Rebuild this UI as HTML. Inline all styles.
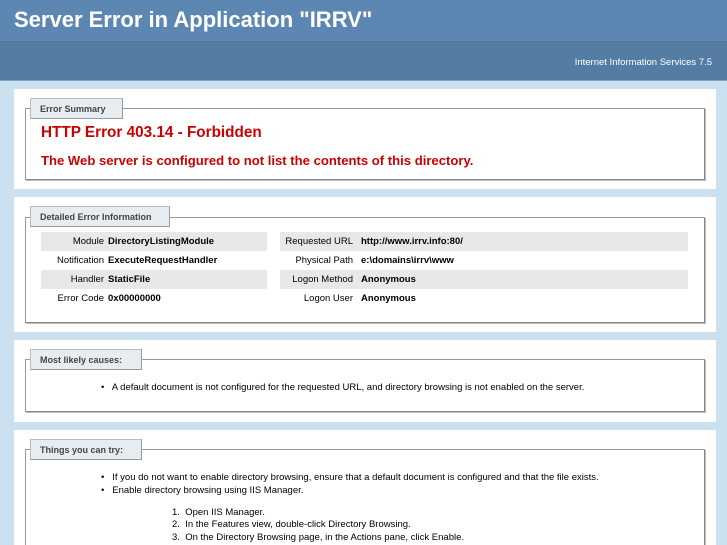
<!DOCTYPE html>
<html><head><style>
*{margin:0;padding:0;box-sizing:border-box}
html,body{width:727px;height:545px;overflow:hidden}
body{background:#CBE1EF;font-family:"Liberation Sans",sans-serif;position:relative;color:#000}
.a{position:absolute}
#h1{left:0;top:0;width:727px;height:42px;background:#5C87B2;border-bottom:1px solid #4F76A0}
#h1 div{position:absolute;left:14px;top:7px;font-size:22px;font-weight:bold;color:#fff;white-space:nowrap}
#h2{left:0;top:42px;width:727px;height:39px;background:#557DA4;border-bottom:1px solid #7DA2C4}
#h2 div{position:absolute;right:15px;top:15px;font-size:9.5px;color:#fff}
.p{background:#fff;left:14px;width:702px}
.f{border:1px solid #999;border-right-color:#888;border-bottom-color:#888;box-shadow:1px 1px 0 #bbb;left:11px;width:680px}
.lg{background:#E7ECF0;border:1px solid #bbb;border-bottom-color:#999;border-right-color:#999;font-size:9px;font-weight:bold;color:#444;padding:5px 9px 0;height:21px;white-space:nowrap}
.red{color:#CC0000;font-weight:bold;white-space:nowrap}
.row{height:19px;white-space:nowrap}
.g{background:#E8E8E8}
.t{font-size:9.5px;white-space:nowrap}
b{font-weight:bold}
</style></head><body>
<div id="h1" class="a"><div>Server Error in Application "IRRV"</div></div>
<div id="h2" class="a"><div>Internet Information Services 7.5</div></div>

<div class="a p" style="top:89px;height:100px">
 <div class="a f" style="top:19px;height:72px"></div>
 <div class="a lg" style="left:16px;top:9px;width:93px">Error Summary</div>
 <div class="a red" style="left:27px;top:35px;font-size:15.3px">HTTP Error 403.14 - Forbidden</div>
 <div class="a red" style="left:27px;top:64px;font-size:13.1px">The Web server is configured to not list the contents of this directory.</div>
</div>

<div class="a p" style="top:197px;height:135px">
 <div class="a f" style="top:20px;height:106px"></div>
 <div class="a lg" style="left:16px;top:9px;width:140px">Detailed Error Information</div>
 <div class="a row g" style="left:27px;top:35px;width:226px"></div>
 <div class="a row g" style="left:27px;top:73px;width:226px"></div>
 <div class="a row g" style="left:266px;top:35px;width:408px"></div>
 <div class="a row g" style="left:266px;top:73px;width:408px"></div>
 <div class="a t" style="right:612px;top:39px">Module</div><div class="a t" style="left:94px;top:39px"><b>DirectoryListingModule</b></div>
 <div class="a t" style="right:612px;top:58px">Notification</div><div class="a t" style="left:94px;top:58px"><b>ExecuteRequestHandler</b></div>
 <div class="a t" style="right:612px;top:77px">Handler</div><div class="a t" style="left:94px;top:77px"><b>StaticFile</b></div>
 <div class="a t" style="right:612px;top:96px">Error Code</div><div class="a t" style="left:94px;top:96px"><b>0x00000000</b></div>
 <div class="a t" style="right:363px;top:39px">Requested URL</div><div class="a t" style="left:347px;top:39px"><b>http://www.irrv.info:80/</b></div>
 <div class="a t" style="right:363px;top:58px">Physical Path</div><div class="a t" style="left:347px;top:58px"><b>e:\domains\irrv\www</b></div>
 <div class="a t" style="right:363px;top:77px">Logon Method</div><div class="a t" style="left:347px;top:77px"><b>Anonymous</b></div>
 <div class="a t" style="right:363px;top:96px">Logon User</div><div class="a t" style="left:347px;top:96px"><b>Anonymous</b></div>
</div>

<div class="a p" style="top:340px;height:82px">
 <div class="a f" style="top:19px;height:53px"></div>
 <div class="a lg" style="left:16px;top:9px;width:112px">Most likely causes:</div>
 <div class="a t" style="left:87px;top:42px">•&nbsp;&nbsp; A default document is not configured for the requested URL, and directory browsing is not enabled on the server.</div>
</div>

<div class="a p" style="top:430px;height:115px">
 <div class="a f" style="top:19px;height:120px"></div>
 <div class="a lg" style="left:16px;top:9px;width:112px">Things you can try:</div>
 <div class="a t" style="left:87px;top:42px">•&nbsp;&nbsp; If you do not want to enable directory browsing, ensure that a default document is configured and that the file exists.</div>
 <div class="a t" style="left:87px;top:55px">•&nbsp;&nbsp; Enable directory browsing using IIS Manager.</div>
 <div class="a t" style="left:158px;top:77px">1.&nbsp; Open IIS Manager.</div>
 <div class="a t" style="left:158px;top:89px">2.&nbsp; In the Features view, double-click Directory Browsing.</div>
 <div class="a t" style="left:158px;top:102px">3.&nbsp; On the Directory Browsing page, in the Actions pane, click Enable.</div>
</div>
</body></html>
